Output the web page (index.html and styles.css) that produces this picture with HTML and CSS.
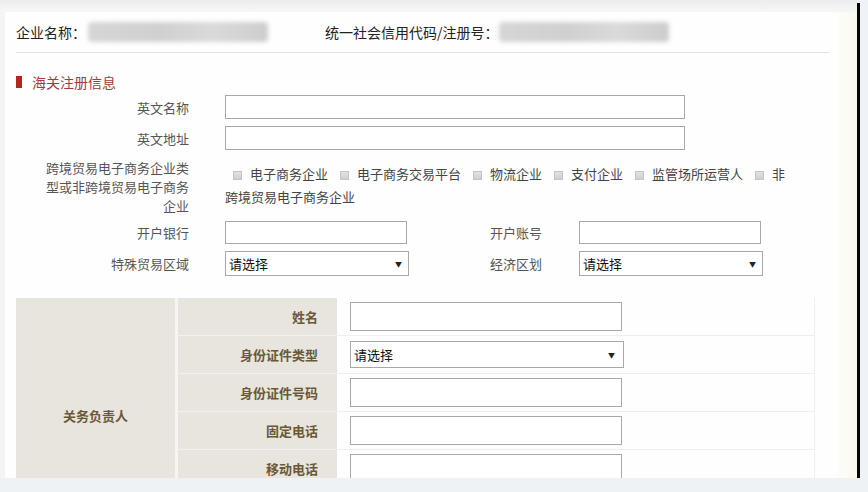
FILE: index.html
```html
<!DOCTYPE html>
<html lang="zh-CN">
<head>
<meta charset="utf-8">
<title>海关注册信息</title>
<link rel="stylesheet" href="styles.css">
</head>
<body>
<div class="stage">
  <div class="main">
    <div class="topstrip"></div>
    <div class="body">
      <div class="gutter"></div>
      <div class="panel">
        <div class="header">
          <div class="hgroup hgroup-1"><span>企业名称：</span><span class="blur blur-1"></span></div>
          <div class="hgroup"><span>统一社会信用代码/注册号：</span><span class="blur blur-2"></span></div>
        </div>
        <div class="title"><span class="marker"></span>海关注册信息</div>

        <div class="row row-1">
          <div class="label">英文名称</div>
          <div class="input input-wide"></div>
        </div>
        <div class="row row-2">
          <div class="label">英文地址</div>
          <div class="input input-wide"></div>
        </div>
        <div class="row row-3">
          <div class="label label-multi">跨境贸易电子商务企业类型或非跨境贸易电子商务企业</div>
          <div class="checks"><span class="cb cb-first"></span><span>电子商务企业</span><span class="cb"></span><span>电子商务交易平台</span><span class="cb"></span><span>物流企业</span><span class="cb"></span><span>支付企业</span><span class="cb"></span><span>监管场所运营人</span><span class="cb"></span><span>非</span><br><span>跨境贸易电子商务企业</span></div>
        </div>
        <div class="row row-4">
          <div class="label">开户银行</div>
          <div class="half"><div class="input input-half"></div></div>
          <div class="label2">开户账号</div>
          <div class="input input-half"></div>
        </div>
        <div class="row row-5">
          <div class="label">特殊贸易区域</div>
          <div class="half"><div class="select select-half"><span>请选择</span><span class="arrow">▼</span></div></div>
          <div class="label2">经济区划</div>
          <div class="select select-half"><span>请选择</span><span class="arrow">▼</span></div>
        </div>

        <div class="tbl">
          <div class="group">关务负责人</div>
          <div class="tlabel">姓名</div>
          <div class="tcell"><div class="input tinput"></div></div>
          <div class="tlabel">身份证件类型</div>
          <div class="tcell"><div class="select tselect"><span>请选择</span><span class="arrow">▼</span></div></div>
          <div class="tlabel">身份证件号码</div>
          <div class="tcell"><div class="input tinput"></div></div>
          <div class="tlabel">固定电话</div>
          <div class="tcell"><div class="input tinput"></div></div>
          <div class="tlabel">移动电话</div>
          <div class="tcell"><div class="input tinput"></div></div>
        </div>
      </div>
      <div class="pale"></div>
    </div>
  </div>
  <div class="bar"></div>
  <div class="edge"></div>
</div>
<div class="band"></div>
</body>
</html>
```

FILE: styles.css
```css
html, body {
  margin: 0;
  padding: 0;
}
body {
  width: 868px;
  height: 492px;
  overflow: hidden;
  background: #eef2f4;
  font-family: "Microsoft YaHei", "Noto Sans CJK SC", "Noto Sans", sans-serif;
  font-size: 13px;
  color: #333;
}
.stage {
  height: 478px;
  display: flex;
  overflow: hidden;
}
.main {
  width: 857px;
  display: flex;
  flex-direction: column;
}
.topstrip {
  height: 12px;
  background: linear-gradient(#eceeee, #f6f7f6);
}
.body {
  flex: 1;
  display: flex;
  min-height: 0;
}
.gutter {
  width: 5px;
  background: #f3f4f4;
}
.panel {
  width: 814px;
  padding: 0 8px 0 11px;
  background: #fffeff;
  overflow: hidden;
}
.pale {
  flex: 1;
  background: linear-gradient(90deg, #fdfdf9, #faf9ee);
}
.bar {
  width: 3px;
  margin-top: 3px;
  background: #050505;
}
.edge {
  flex: 1;
  background: #eff2f6;
}
.band {
  height: 14px;
  background: #eef2f4;
}

/* header */
.header {
  height: 40px;
  display: flex;
  align-items: center;
  border-bottom: 1px solid #e4e4e4;
  font-size: 14px;
  color: #222;
}
.hgroup {
  display: flex;
  align-items: center;
}
.hgroup-1 {
  width: 309px;
}
.blur {
  display: inline-block;
  height: 20px;
  background: linear-gradient(90deg, #d6d6d6, #d0d0d0 40%, #dadada 70%, #cdcdcd);
  filter: blur(2px);
  border-radius: 4px;
}
.blur-1 {
  width: 180px;
  margin-left: 2px;
}
.blur-2 {
  width: 170px;
  margin-left: 0;
}

/* title */
.title {
  margin-top: 19px;
  height: 20px;
  display: flex;
  align-items: center;
  color: #a33a3a;
  font-size: 14px;
}
.marker {
  width: 6px;
  height: 12px;
  background: #b3261e;
  margin-right: 10px;
}

/* rows */
.row {
  display: flex;
  align-items: center;
}
.row-1 { margin-top: 3px; }
.row-2 { margin-top: 7px; }
.row-3 { margin-top: 8px; align-items: flex-start; }
.row-4 { margin-top: 6px; }
.row-5 { margin-top: 7px; }
.label {
  width: 173px;
  margin-right: 36px;
  text-align: right;
  color: #555;
  flex: none;
  box-sizing: border-box;
}
.label-multi {
  line-height: 19px;
  padding-left: 26px;
}
.half {
  width: 265px;
  flex: none;
}
.label2 {
  width: 89px;
  flex: none;
  color: #555;
}
.input {
  box-sizing: border-box;
  height: 24px;
  border: 1px solid #a8a8a8;
  background: #fff;
}
.input-wide { width: 460px; }
.input-half { width: 182px; height: 23px; }
.select {
  box-sizing: border-box;
  height: 25px;
  border: 1px solid #a8a8a8;
  background: #fff;
  display: flex;
  align-items: center;
  justify-content: space-between;
  padding: 0 6px 0 3px;
  color: #111;
  font-size: 13px;
}
.select-half { width: 184px; }
.arrow {
  font-size: 7px;
  color: #222;
}
.checks {
  width: 566px;
  padding-top: 4px;
  line-height: 23px;
  color: #444;
}
.cb {
  display: inline-block;
  box-sizing: border-box;
  width: 9px;
  height: 9px;
  margin: 0 8px 0 12px;
  border: 1px solid #c4c4c4;
  background: linear-gradient(#e2e2e2, #cfcfcf);
  vertical-align: -1px;
}
.cb-first {
  margin-left: 8px;
}

/* table */
.tbl {
  margin-top: 22px;
  width: 799px;
  display: grid;
  grid-template-columns: 159px 162px 478px;
  grid-auto-rows: 38px;
}
.group {
  grid-row: span 5;
  background: #e8e5de;
  display: flex;
  align-items: center;
  justify-content: center;
  color: #6b5836;
  font-weight: bold;
  padding-top: 44px;
}
.tlabel {
  box-sizing: border-box;
  border-left: 3px solid #f7f6f2;
  border-bottom: 1px solid #f3f1ec;
  background: #e8e5de;
  display: flex;
  align-items: center;
  justify-content: flex-end;
  padding-right: 19px;
  color: #6b5836;
  font-weight: bold;
}
.tcell {
  box-sizing: border-box;
  border-bottom: 1px solid #eeeeee;
  border-right: 1px solid #f0f0f0;
  display: flex;
  align-items: center;
  padding-left: 13px;
}
.tinput {
  width: 272px;
  height: 29px;
}
.tselect {
  width: 274px;
  height: 27px;
  padding-right: 8px;
}
```
